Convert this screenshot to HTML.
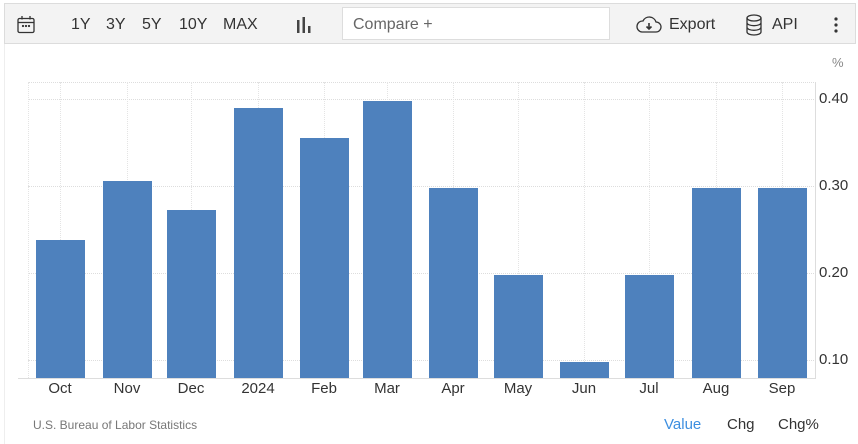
<!DOCTYPE html>
<html><head><style>
body{margin:0;width:858px;height:443px;background:#fff;font-family:"Liberation Sans",sans-serif;position:relative;overflow:hidden}
.tb{position:absolute;left:4px;top:3px;width:852px;height:41px;background:#f3f3f3;border:1px solid #dcdcdc;box-sizing:border-box}
.t{position:absolute;top:16px;font-size:16px;color:#333}
.cmp{position:absolute;left:342px;top:7px;width:268px;height:33px;background:#fff;border:1px solid #ddd;box-sizing:border-box;font-size:16px;color:#666;padding:8px 10px}
.frame{position:absolute;left:4px;top:44px;width:1px;height:400px;background:#eee}
.bar{position:absolute;background:#4e81bd;width:49px;bottom:65px}
.xl{position:absolute;top:380px;font-size:15px;color:#333;width:60px;text-align:center}
.yl{position:absolute;left:819px;font-size:15px;color:#333}
.gh{position:absolute;left:28px;width:788px;border-top:1px dotted #ddd;height:0}
.gv{position:absolute;top:82px;height:296px;border-left:1px dotted #e4e4e4;width:0}
</style></head><body>
<div class="tb"></div>
<svg style="position:absolute;left:16px;top:15px" width="20" height="20" viewBox="0 0 20 20" fill="none" stroke="#333" stroke-width="1.3"><rect x="2" y="3.5" width="16" height="14" rx="1.5"/><line x1="2" y1="7.5" x2="18" y2="7.5"/><line x1="6" y1="1" x2="6" y2="4.5"/><line x1="14" y1="1" x2="14" y2="4.5"/><circle cx="7" cy="11" r=".5" fill="#333"/><circle cx="10" cy="11" r=".5" fill="#333"/><circle cx="13" cy="11" r=".5" fill="#333"/></svg>
<span class="t" style="left:71px">1Y</span><span class="t" style="left:106px">3Y</span><span class="t" style="left:142px">5Y</span><span class="t" style="left:179px">10Y</span><span class="t" style="left:223px">MAX</span>
<svg style="position:absolute;left:296px;top:17px" width="16" height="16"><rect x="1" y="3" width="2.5" height="13" fill="#444"/><rect x="6.5" y="0" width="2.5" height="16" fill="#444"/><rect x="12" y="9" width="2.5" height="7" fill="#444"/></svg>
<div class="cmp">Compare +</div>
<svg style="position:absolute;left:636px;top:16px" width="26" height="18" viewBox="0 0 26 18" fill="none" stroke="#333" stroke-width="1.3"><path d="M6 16H20a5 5 0 0 0 0-10 7 7 0 0 0-13-1A5.5 5.5 0 0 0 6 16z"/><path d="M13 7v6M10.5 10.5l2.5 2.5 2.5-2.5" stroke-width="1.6"/></svg>
<span class="t" style="left:669px">Export</span>
<svg style="position:absolute;left:745px;top:14px" width="18" height="22" viewBox="0 0 18 22" fill="none" stroke="#333" stroke-width="1.3"><ellipse cx="9" cy="4" rx="7" ry="3"/><path d="M2 4v14c0 1.7 3 3 7 3s7-1.3 7-3V4M2 8.7c0 1.7 3 3 7 3s7-1.3 7-3M2 13.3c0 1.7 3 3 7 3s7-1.3 7-3"/></svg>
<span class="t" style="left:772px">API</span>
<svg style="position:absolute;left:834px;top:17px" width="4" height="16"><circle cx="2" cy="2" r="1.6" fill="#333"/><circle cx="2" cy="8" r="1.6" fill="#333"/><circle cx="2" cy="14" r="1.6" fill="#333"/></svg>
<div class="frame"></div>
<span style="position:absolute;left:832px;top:55px;font-size:13px;color:#888">%</span>
<div class="gh" style="top:82px"></div><div class="gh" style="top:99px"></div><div class="gh" style="top:186px"></div><div class="gh" style="top:273px"></div><div class="gh" style="top:360px"></div>
<div class="gv" style="left:28px"></div>
<div class="gv" style="left:60px"></div><div class="gv" style="left:127px"></div><div class="gv" style="left:191px"></div><div class="gv" style="left:258px"></div><div class="gv" style="left:324px"></div><div class="gv" style="left:387px"></div><div class="gv" style="left:453px"></div><div class="gv" style="left:518px"></div><div class="gv" style="left:584px"></div><div class="gv" style="left:649px"></div><div class="gv" style="left:716px"></div><div class="gv" style="left:782px"></div>
<div class="bar" style="left:36px;top:240px"></div>
<div class="bar" style="left:103px;top:181px"></div>
<div class="bar" style="left:167px;top:210px"></div>
<div class="bar" style="left:234px;top:108px"></div>
<div class="bar" style="left:300px;top:138px"></div>
<div class="bar" style="left:363px;top:101px"></div>
<div class="bar" style="left:429px;top:188px"></div>
<div class="bar" style="left:494px;top:275px"></div>
<div class="bar" style="left:560px;top:362px"></div>
<div class="bar" style="left:625px;top:275px"></div>
<div class="bar" style="left:692px;top:188px"></div>
<div class="bar" style="left:758px;top:188px"></div>
<div style="position:absolute;left:18px;top:378px;width:798px;height:1px;background:#ddd"></div>
<div style="position:absolute;left:815px;top:82px;width:1px;height:296px;background:#ddd"></div>
<span class="yl" style="top:90px">0.40</span><span class="yl" style="top:177px">0.30</span><span class="yl" style="top:264px">0.20</span><span class="yl" style="top:351px">0.10</span>
<span class="xl" style="left:30px">Oct</span><span class="xl" style="left:97px">Nov</span><span class="xl" style="left:161px">Dec</span><span class="xl" style="left:228px">2024</span><span class="xl" style="left:294px">Feb</span><span class="xl" style="left:357px">Mar</span><span class="xl" style="left:423px">Apr</span><span class="xl" style="left:488px">May</span><span class="xl" style="left:554px">Jun</span><span class="xl" style="left:619px">Jul</span><span class="xl" style="left:686px">Aug</span><span class="xl" style="left:752px">Sep</span>
<span style="position:absolute;left:33px;top:418px;font-size:12px;color:#777">U.S. Bureau of Labor Statistics</span>
<span style="position:absolute;left:664px;top:416px;font-size:15px;color:#3d8fe0">Value</span>
<span style="position:absolute;left:727px;top:416px;font-size:15px;color:#333">Chg</span>
<span style="position:absolute;left:778px;top:416px;font-size:15px;color:#333">Chg%</span>
</body></html>
